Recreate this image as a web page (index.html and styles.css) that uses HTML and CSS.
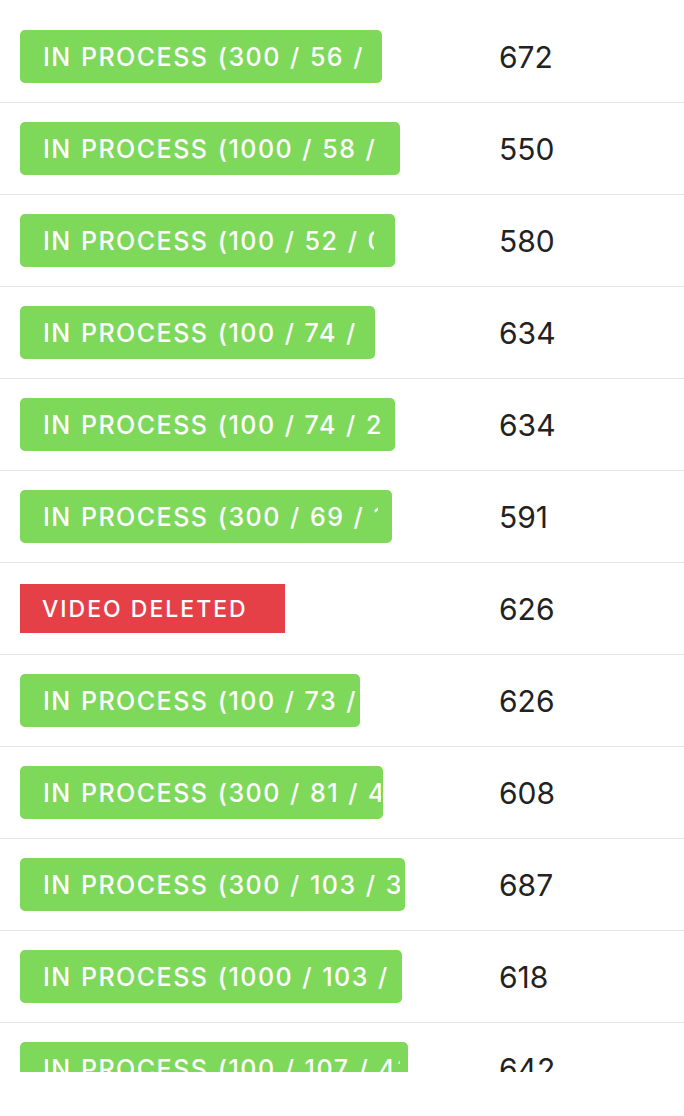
FILE: index.html
```html
<!DOCTYPE html>
<html lang="en">
<head>
  <meta charset="UTF-8">
  <title>Orders</title>
  <meta name="viewport" content="width=device-width, initial-scale=1.0">
  <link rel="stylesheet" href="styles.css">
</head>
<body>
  <div class="list">
    <div class="row">
      <div class="cell-status"><span class="badge green" style="width: 362px"><span class="label" style="width: 319px">IN PROCESS (300 / 56 / 23)</span></span></div>
      <div class="cell-num">672</div>
    </div>
    <div class="row">
      <div class="cell-status"><span class="badge green" style="width: 380px"><span class="label" style="width: 337px">IN PROCESS (1000 / 58 / 14)</span></span></div>
      <div class="cell-num">550</div>
    </div>
    <div class="row">
      <div class="cell-status"><span class="badge green" style="width: 375px"><span class="label" style="width: 331px">IN PROCESS (100 / 52 / 0)</span></span></div>
      <div class="cell-num">580</div>
    </div>
    <div class="row">
      <div class="cell-status"><span class="badge green" style="width: 355px"><span class="label" style="width: 313px">IN PROCESS (100 / 74 / 12)</span></span></div>
      <div class="cell-num">634</div>
    </div>
    <div class="row">
      <div class="cell-status"><span class="badge green" style="width: 375px"><span class="label" style="width: 340px">IN PROCESS (100 / 74 / 21)</span></span></div>
      <div class="cell-num">634</div>
    </div>
    <div class="row">
      <div class="cell-status"><span class="badge green" style="width: 372px"><span class="label" style="width: 335px">IN PROCESS (300 / 69 / 17)</span></span></div>
      <div class="cell-num">591</div>
    </div>
    <div class="row">
      <div class="cell-status"><span class="badge red"><span class="label">VIDEO DELETED</span></span></div>
      <div class="cell-num">626</div>
    </div>
    <div class="row">
      <div class="cell-status"><span class="badge green" style="width: 340px"><span class="label" style="width: 313px">IN PROCESS (100 / 73 / 19)</span></span></div>
      <div class="cell-num">626</div>
    </div>
    <div class="row">
      <div class="cell-status"><span class="badge green" style="width: 363px"><span class="label" style="width: 338px">IN PROCESS (300 / 81 / 44)</span></span></div>
      <div class="cell-num">608</div>
    </div>
    <div class="row">
      <div class="cell-status"><span class="badge green" style="width: 385px"><span class="label" style="width: 357px">IN PROCESS (300 / 103 / 39)</span></span></div>
      <div class="cell-num">687</div>
    </div>
    <div class="row">
      <div class="cell-status"><span class="badge green" style="width: 382px"><span class="label" style="width: 347px">IN PROCESS (1000 / 103 / 8)</span></span></div>
      <div class="cell-num">618</div>
    </div>
    <div class="row">
      <div class="cell-status"><span class="badge green" style="width: 388px"><span class="label" style="width: 357px">IN PROCESS (100 / 107 / 43)</span></span></div>
      <div class="cell-num">642</div>
    </div>
  </div>
</body>
</html>
```

FILE: styles.css
```css
* {
  box-sizing: border-box;
}
body {
  margin: 0;
  background: #fff;
  font-family: Inter, "Open Sans", sans-serif;
}
.list {
  margin-top: 11px;
  height: 1061px;
  overflow: hidden;
}
.row {
  display: grid;
  grid-template-columns: 479px 1fr;
  align-items: center;
  height: 92px;
  padding-left: 20px;
  border-bottom: 1px solid #e6e6e6;
}
.badge {
  display: inline-flex;
  align-items: center;
  color: #fff;
  font-weight: 500;
  white-space: nowrap;
}
.badge .label {
  display: block;
  flex: none;
  overflow: hidden;
}
.badge.green {
  height: 53px;
  padding-left: 23px;
  background: #7ed85a;
  border-radius: 5px;
  font-size: 25px;
  letter-spacing: 1.5px;
  word-spacing: 1px;
}
.badge.red {
  width: 265px;
  height: 49px;
  padding-left: 22px;
  background: #e54047;
  font-size: 23px;
  letter-spacing: 2px;
}
.cell-num {
  font-size: 30px;
  color: #222;
}
```
